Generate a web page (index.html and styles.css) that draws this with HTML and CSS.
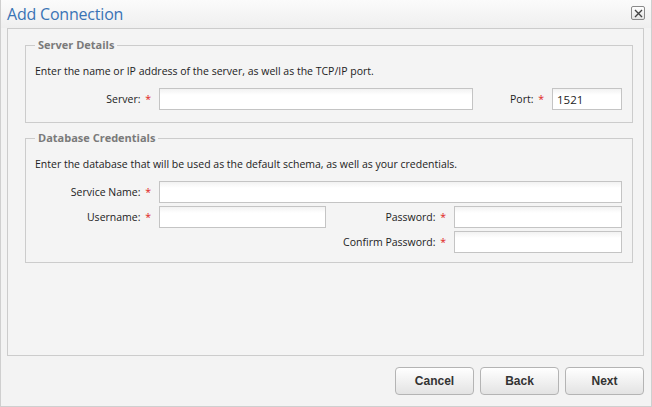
FILE: index.html
```html
<!DOCTYPE html>
<html lang="en">
	<head>
		<meta charset="UTF-8" />
		<title>Add Connection</title>
		<link rel="stylesheet" href="styles.css">
	</head>
	<body>
		<div class="dialog">
			<div class="header">
				<h1>Add Connection</h1>
				<button type="button" class="close" title="Close">
					<svg width="9" height="9" viewBox="0 0 9 9">
						<path d="M1 1 L8 8 M8 1 L1 8" stroke="#444" stroke-width="1.4" />
					</svg>
				</button>
			</div>
			<div class="panel">
				<fieldset>
					<legend>Server Details</legend>
					<p>Enter the name or IP address of the server, as well as the TCP/IP port.</p>
					<div class="grid grid1">
						<label for="server">Server: <span class="req">*</span></label>
						<input type="text" id="server" />
						<label for="port">Port: <span class="req">*</span></label>
						<input type="text" id="port" value="1521" />
					</div>
				</fieldset>
				<fieldset class="creds">
					<legend>Database Credentials</legend>
					<p>Enter the database that will be used as the default schema, as well as your credentials.</p>
					<div class="grid grid2">
						<label for="service">Service Name: <span class="req">*</span></label>
						<input type="text" id="service" class="wide" />
						<label for="username">Username: <span class="req">*</span></label>
						<input type="text" id="username" />
						<label for="password">Password: <span class="req">*</span></label>
						<input type="password" id="password" />
						<label for="confirm" class="col3">Confirm Password: <span class="req">*</span></label>
						<input type="password" id="confirm" />
					</div>
				</fieldset>
			</div>
			<div class="buttons">
				<button type="button">Cancel</button>
				<button type="button">Back</button>
				<button type="button">Next</button>
			</div>
		</div>
	</body>
</html>
```

FILE: styles.css
```css
* {
	box-sizing: border-box;
}

html,
body {
	margin: 0;
	padding: 0;
	background: #f3f3f3;
}

.dialog {
	width: 652px;
	height: 407px;
	border: 1px solid #cfcfcf;
	border-top: none;
	background: #f3f3f3;
	font-family: "Open Sans", "Liberation Sans", sans-serif;
	font-size: 10.5px;
	color: #222;
	display: flex;
	flex-direction: column;
}

.header {
	height: 28px;
	display: flex;
	align-items: center;
	justify-content: space-between;
	padding: 0 6px;
	background: linear-gradient(#fbfbfb, #efefef);
}

.header h1 {
	margin: 0;
	font-size: 16px;
	font-weight: normal;
	color: #3a73b5;
	letter-spacing: -0.2px;
}

.close {
	width: 14px;
	height: 14px;
	padding: 0;
	margin-top: -2px;
	display: flex;
	align-items: center;
	justify-content: center;
	border: 1px solid #8a8a8a;
	border-radius: 2px;
	background: linear-gradient(#ffffff, #e4e4e4);
}

.panel {
	margin: 0 7px 0 6px;
	height: 328px;
	border: 1px solid #cccccc;
	background: #f4f4f4;
	padding: 9px 10px 0 17px;
}

fieldset {
	margin: 0 0 8px 0;
	padding: 0 10px 12px 9px;
	border: 1px solid #cccccc;
	border-radius: 0;
}

fieldset.creds {
	padding-bottom: 9px;
}

legend {
	padding: 0 3px;
	font-weight: bold;
	font-size: 11px;
	color: #7a7a7a;
	line-height: 14px;
}

fieldset p {
	margin: 11px 0 9px 0;
	line-height: 16px;
}

.grid {
	display: grid;
	column-gap: 8px;
	row-gap: 3px;
	align-items: center;
}

.grid1 {
	grid-template-columns: 116px 314px 1fr 70px;
}

.grid2 {
	grid-template-columns: 116px 167px 1fr 168px;
}

.grid label {
	text-align: right;
	white-space: nowrap;
}

.grid .wide {
	grid-column: 2 / 5;
}

.grid .col3 {
	grid-column: 3;
}

.req {
	color: #e02020;
	margin-left: 2px;
}

.grid input {
	height: 22px;
	border: 1px solid #c4c4c4;
	background: linear-gradient(#f2f2f2, #ffffff 6px);
	font-family: "Open Sans", "Liberation Sans", sans-serif;
	font-size: 11.5px;
	color: #222;
	padding: 0 4px;
	width: 100%;
}

.buttons {
	display: flex;
	justify-content: flex-end;
	gap: 6px;
	padding: 11px 7px 0 0;
}

.buttons button {
	width: 79px;
	height: 28px;
	border: 1px solid #b4b4b4;
	border-radius: 4px;
	background: linear-gradient(#ffffff, #e3e3e3);
	font-family: "Liberation Sans", Arial, sans-serif;
	font-size: 12px;
	font-weight: bold;
	color: #333;
}
```
